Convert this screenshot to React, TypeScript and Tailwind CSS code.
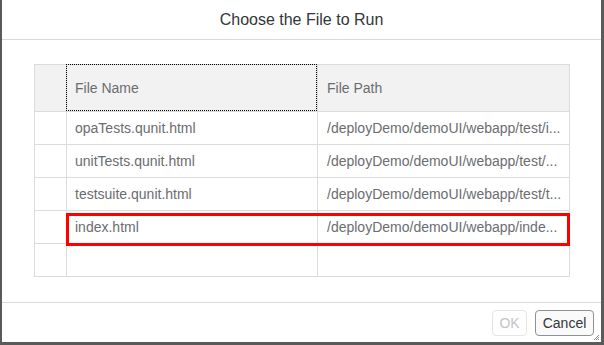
const rows = [
  { name: "opaTests.qunit.html", path: "/deployDemo/demoUI/webapp/test/i..." },
  { name: "unitTests.qunit.html", path: "/deployDemo/demoUI/webapp/test/..." },
  { name: "testsuite.qunit.html", path: "/deployDemo/demoUI/webapp/test/t..." },
  { name: "index.html", path: "/deployDemo/demoUI/webapp/inde..." },
  { name: "", path: "" },
];

export default function App() {
  return (
    <div
      className="w-[604px] h-[345px] bg-[#5a5a5a] pl-[2px] overflow-hidden"
      style={{ fontFamily: '"Liberation Sans", Arial, sans-serif' }}
    >
      <div className="relative bg-white w-[599px] h-[342px] flex flex-col">
        {/* Header */}
        <div className="h-[40px] shrink-0 border-b border-[#d9d9d9] flex items-center justify-center text-[16px] text-[#32363a]">
          Choose the File to Run
        </div>

        {/* Content */}
        <div className="flex-1 pt-[24px] pl-[32px]">
          <div className="relative w-[536px] border-l border-t border-[#dcdcdc] text-[14px] text-[#6a6d70]">
            {/* Column header */}
            <div className="flex h-[47px] bg-[#f2f2f2]">
              <div className="w-[32px] border-r border-b border-[#dcdcdc]" />
              <div className="relative w-[251px] border-r border-b border-[#dcdcdc] flex items-center pl-[8px]">
                File Name
                <div className="absolute -left-px -top-px right-0 bottom-0 border border-dotted border-black" />
              </div>
              <div className="w-[252px] border-r border-b border-[#dcdcdc] flex items-center pl-[9px]">
                File Path
              </div>
            </div>

            {rows.map((row, i) => (
              <div key={i} className="flex h-[33px]">
                <div className="w-[32px] border-r border-b border-[#dcdcdc]" />
                <div className="w-[251px] border-r border-b border-[#dcdcdc] flex items-center pl-[8px] whitespace-nowrap">
                  {row.name}
                </div>
                <div className="w-[252px] border-r border-b border-[#dcdcdc] flex items-center pl-[9px] whitespace-nowrap overflow-hidden">
                  {row.path}
                </div>
              </div>
            ))}

            {/* Highlight around index.html */}
            <div className="absolute left-[31px] top-[148px] w-[504px] h-[33px] border-[3px] border-[#ff0000]" />
          </div>
        </div>

        {/* Footer */}
        <div className="h-[40px] shrink-0 border-t border-[#d9d9d9] flex justify-end items-start gap-[8px] pt-[7px] pr-[7px]">
          <button className="w-[35px] h-[26px] rounded-[4px] border border-[#e5e5e5] bg-white text-[14px] text-[#c4c4c4]">
            OK
          </button>
          <button className="w-[59px] h-[26px] rounded-[4px] border border-[#8d9297] bg-[#fafafa] text-[14px] text-[#32363a]">
            Cancel
          </button>
        </div>

        {/* Resize grip */}
        <svg
          className="absolute right-[1px] bottom-[1px]"
          width="7"
          height="7"
          viewBox="0 0 7 7"
        >
          <path d="M6 1 L1 6 M6 3 L3 6 M6 5 L5 6" stroke="#8a8a8a" strokeWidth="1" />
        </svg>
      </div>
    </div>
  );
}
